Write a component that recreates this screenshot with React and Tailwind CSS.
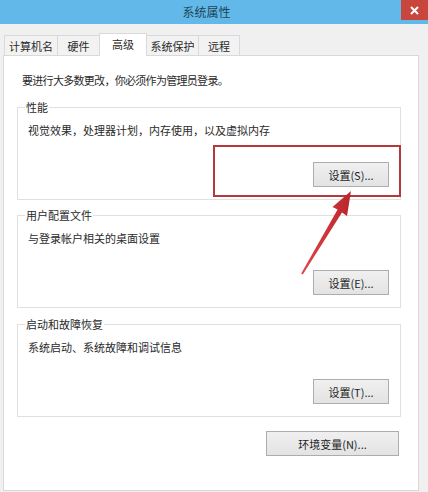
import React from "react";

const tabs = [
  { label: "计算机名", w: "w-[54px]" },
  { label: "硬件", w: "w-[43px]" },
  { label: "高级", w: "w-[48px]", active: true },
  { label: "系统保护", w: "w-[53px]" },
  { label: "远程", w: "w-[42px]" },
];

const groups = [
  { title: "性能", desc: "视觉效果，处理器计划，内存使用，以及虚拟内存", btn: "设置(S)..." },
  { title: "用户配置文件", desc: "与登录帐户相关的桌面设置", btn: "设置(E)..." },
  { title: "启动和故障恢复", desc: "系统启动、系统故障和调试信息", btn: "设置(T)..." },
];

function WinButton({ children, className = "" }) {
  return (
    <button
      className={`h-[25px] border border-[#adadad] bg-gradient-to-b from-[#f0f0f0] to-[#e3e3e3] text-[11px] leading-[14px] text-[#1e1e1e] ${className}`}
    >
      {children}
    </button>
  );
}

function GroupBox({ title, desc, btn, mt }) {
  return (
    <div className={`w-[384px] border border-[#e0e0e0] flex flex-col pl-[10px] pr-[11px] pb-[12px] ${mt}`}>
      <span className="-mt-[8px] -ml-[3px] self-start bg-white px-[1px] leading-[14px] text-[#2a2a2a]">
        {title}
      </span>
      <p className="mt-[9px] leading-[14px] text-[#2a2a2a]">{desc}</p>
      <div className="mt-[25px] flex justify-end">
        <WinButton className="w-[76px]">{btn}</WinButton>
      </div>
    </div>
  );
}

export default function App() {
  return (
    <div className="relative w-[428px] h-[492px] overflow-hidden bg-[#f0f0f0] font-['Noto_Sans_CJK_SC',sans-serif] text-[11px] text-[#222]">
      {/* Title bar */}
      <div className="h-[24px] bg-[#63b8ea] flex items-start">
        <div className="w-[12px]" />
        <div className="flex-1 h-[24px] flex items-center justify-center text-[12px] text-[#1b4656]">
          系统属性
        </div>
        <div className="w-[27px] h-[20px] bg-[#c9463d] flex items-center justify-center">
          <svg width="9" height="9" viewBox="0 0 9 9">
            <path d="M1 1L8 8M8 1L1 8" stroke="#fff" strokeWidth="2" />
          </svg>
        </div>
      </div>

      {/* Tabs */}
      <div className="mt-[9px] h-[22px] pl-[4px] flex items-end">
        {tabs.map((t, i) => (
          <div
            key={t.label}
            className={`${t.w} ${i > 0 ? "-ml-px" : ""} ${
              t.active
                ? "relative z-10 h-[23px] -mb-px bg-white pb-[3px]"
                : "h-[20px] bg-[#f2f2f2]"
            } border border-b-0 border-[#d9d9d9] flex items-center justify-center leading-[14px] text-[#2a2a2a]`}
          >
            {t.label}
          </div>
        ))}
      </div>

      {/* Panel */}
      <div className="ml-[3px] w-[416px] h-[436px] border border-[#d9d9d9] bg-white pl-[13px] pt-[17px] flex flex-col">
        <p className="ml-[5px] leading-[14px] tracking-[-0.7px] text-[#2a2a2a]">
          要进行大多数更改，你必须作为管理员登录。
        </p>
        <GroupBox {...groups[0]} mt="mt-[20px]" />
        <GroupBox {...groups[1]} mt="mt-[15px]" />
        <GroupBox {...groups[2]} mt="mt-[16px]" />
        <div className="w-[382px] mt-[14px] flex justify-end">
          <WinButton className="w-[133px]">环境变量(N)...</WinButton>
        </div>
      </div>

      {/* Annotation: highlight box */}
      <div className="absolute left-[213px] top-[145px] w-[188px] h-[52px] border-2 border-[#b4383c] pointer-events-none" />

      {/* Annotation: arrow */}
      <svg
        className="absolute left-0 top-0 pointer-events-none"
        width="428"
        height="492"
        viewBox="0 0 428 492"
      >
        <defs>
          <linearGradient id="ar" x1="0" y1="0" x2="1" y2="0">
            <stop offset="0" stopColor="#e0454a" />
            <stop offset="1" stopColor="#b9252b" />
          </linearGradient>
        </defs>
        <polygon
          points="351,191 347,216 342,212.5 302.8,274.5 301.2,273.6 337.6,209.4 332.5,207"
          fill="url(#ar)"
        />
      </svg>
    </div>
  );
}
